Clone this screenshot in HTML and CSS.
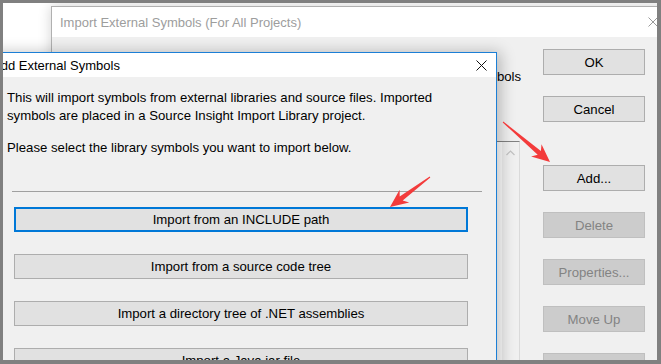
FILE: index.html
```html
<!DOCTYPE html>
<html lang="en">
<head>
  <meta charset="UTF-8" />
  <title>Add External Symbols</title>
  <link rel="stylesheet" href="styles.css">
</head>
<body>

  <div class="frame">
    <div class="desktop">

      <!-- Window behind: the project-wide import list -->
      <div class="window back">
        <div class="titlebar">
          <span class="title">Import External Symbols (For All Projects)</span>
          <svg class="close" width="10" height="10" viewBox="0 0 10 10">
            <path d="M0.5 0.5 L9.5 9.5 M9.5 0.5 L0.5 9.5" stroke="#9a9a9a" stroke-width="1" fill="none" />
          </svg>
        </div>
        <div class="body">
          <div class="main">
            <p class="intro">
              Symbols from the libraries listed below are made available to every project.<br>
              These libraries are shared by all of the projects when finding up global symbols
            </p>
            <div class="listbox">
              <div class="scrollbar">
                <svg width="9" height="6" viewBox="0 0 9 6">
                  <path d="M0.5 5 L4.5 1 L8.5 5" stroke="#c2c2c2" stroke-width="1.2" fill="none" />
                </svg>
              </div>
            </div>
          </div>
          <div class="actions">
            <button class="btn">OK</button>
            <button class="btn">Cancel</button>
            <button class="btn btn-add">Add...</button>
            <button class="btn" disabled>Delete</button>
            <button class="btn" disabled>Properties...</button>
            <button class="btn" disabled>Move Up</button>
            <button class="btn" disabled>Move Down</button>
          </div>
        </div>
      </div>

      <!-- Active window on top -->
      <div class="window front">
        <div class="titlebar">
          <span class="title">Add External Symbols</span>
          <svg class="close" width="11" height="11" viewBox="0 0 11 11">
            <path d="M0.5 0.5 L10.5 10.5 M10.5 0.5 L0.5 10.5" stroke="#111" stroke-width="1" fill="none" />
          </svg>
        </div>
        <div class="body">
          <p>This will import symbols from external libraries and source files. Imported<br>
          symbols are placed in a Source Insight Import Library project.</p>
          <p class="prompt">Please select the library symbols you want to import below.</p>
          <div class="separator"></div>
          <div class="choices">
            <button class="choice focused">Import from an INCLUDE path</button>
            <button class="choice">Import from a source code tree</button>
            <button class="choice">Import a directory tree of .NET assemblies</button>
            <button class="choice">Import a Java jar file</button>
          </div>
        </div>
      </div>

      <svg class="arrows" width="661" height="364" viewBox="0 0 661 364">
        <polygon fill="#f33b3b" points="430.3,177.4 402.7,200.6 409.2,202.6 390,207 399.6,189.8 399.7,196.6 429.7,176.6" />
        <polygon fill="#f33b3b" points="502.7,122.4 537.7,154.8 531.1,156.4 550,162 541.5,144.2 540.9,151 503.3,121.6" />
      </svg>

    </div>
  </div>

</body>
</html>
```

FILE: styles.css
```css
body {
  margin: 0;
  font-family: "Liberation Sans", Arial, sans-serif;
  font-size: 13.2px;
  color: #000;
}

.frame {
  width: 661px;
  height: 364px;
  box-sizing: border-box;
  border-style: solid;
  border-color: #808080;
  border-width: 3px 4px 4px 3px;
}

.desktop {
  position: relative;
  width: 100%;
  height: 100%;
  overflow: hidden;
  background: #fff;
}

.window {
  position: absolute;
  display: flex;
  flex-direction: column;
  box-sizing: border-box;
  background: #f0f0f0;
}

.titlebar {
  display: flex;
  align-items: center;
  justify-content: space-between;
  background: #fff;
  font-size: 13px;
}

p {
  margin: 0;
  line-height: 18px;
}

button {
  font-family: inherit;
  font-size: 13.2px;
  color: #000;
  background: #e1e1e1;
  border: 1px solid #adadad;
  padding: 0;
  box-sizing: border-box;
}

/* back window */

.back {
  left: 48px;
  top: 3px;
  width: 640px;
  height: 420px;
  border: 1px solid #b0b0b0;
  box-shadow: 0 0 12px rgba(0,0,0,0.18);
}

.back .titlebar {
  height: 30px;
  padding: 0 32px 0 8px;
}

.back .title {
  color: #9d9d9d;
}

.back .body {
  display: flex;
  flex: 1;
}

.main {
  display: flex;
  flex-direction: column;
  width: 460px;
  padding: 13px 0 0 8px;
}

.intro {
  white-space: nowrap;
}

.listbox {
  flex: 1;
  margin-top: 55px;
  background: #fff;
  border-top: 1px solid #828282;
  border-right: 1px solid #dadada;
  display: flex;
  justify-content: flex-end;
}

.scrollbar {
  width: 17px;
  background: #f0f0f0;
  display: flex;
  justify-content: center;
  padding-top: 8px;
}

.actions {
  display: flex;
  flex-direction: column;
  gap: 21px;
  width: 102px;
  margin-left: 23px;
  padding-top: 12px;
}

.btn {
  height: 26px;
}

.btn-add {
  margin-top: 22px;
}

.btn:disabled {
  background: #cccccc;
  border-color: #bfbfbf;
  color: #838383;
}

/* front window */

.front {
  left: -16px;
  top: 49px;
  width: 510px;
  height: 340px;
  border: 1px solid #1c7fd6;
  box-shadow: 2px 2px 14px 2px rgba(0,0,0,0.24);
}

.front .titlebar {
  height: 24px;
  padding: 0 9px 0 4px;
}

.front .body {
  padding: 12px 14px 0 19px;
}

.prompt {
  margin-top: 14px;
}

.separator {
  height: 1px;
  background: #a0a0a0;
  margin: 34px 0 15px 5px;
}

.choices {
  display: flex;
  flex-direction: column;
  gap: 22px;
  margin: 0 14px 0 7px;
}

.choice {
  height: 25px;
}

.choice.focused {
  border: 2px solid #0078d7;
}

.arrows {
  position: absolute;
  left: -3px;
  top: -3px;
  pointer-events: none;
}
```
